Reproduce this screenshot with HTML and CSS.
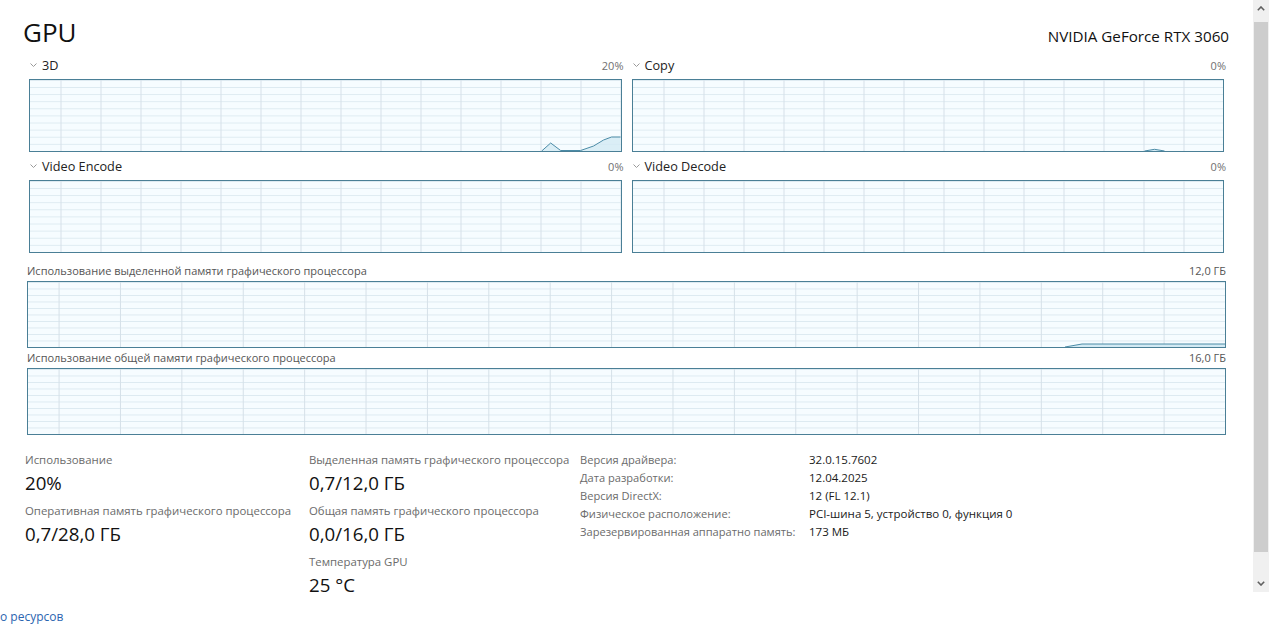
FILE: index.html
```html
<!DOCTYPE html>
<html lang="ru">
<head>
<meta charset="utf-8">
<title>GPU</title>
<link rel="stylesheet" href="styles.css">
</head>
<body>
<div class="window">
  <div class="main">
    <div class="content">
      <header class="head">
        <h1 class="title">GPU</h1>
        <div class="model">NVIDIA GeForce RTX 3060</div>
      </header>

      <div class="engines">
        <section class="engine">
          <div class="elabel">
            <span class="ename"><svg class="chev" viewBox="0 0 7 4" width="7" height="4"><polyline points="0.5,0.5 3.5,3.5 6.5,0.5" fill="none" stroke="#9a9a9a" stroke-width="1"/></svg>3D</span>
            <span class="epct">20%</span>
          </div>
          <div class="graph g-small">
            <svg class="curve" viewBox="0 0 592 71" preserveAspectRatio="none">
              <polygon points="513,71 522,63 532,70.5 552,70.5 565,66 575,60 583,57 592,57 592,71" fill="#d3eaf4" fill-opacity="0.8"/>
              <polyline points="513,71 522,63 532,70.5 552,70.5 565,66 575,60 583,57 592,57" fill="none" stroke="#4a8ba6" stroke-width="1"/>
            </svg>
          </div>
        </section>
        <section class="engine">
          <div class="elabel">
            <span class="ename"><svg class="chev" viewBox="0 0 7 4" width="7" height="4"><polyline points="0.5,0.5 3.5,3.5 6.5,0.5" fill="none" stroke="#9a9a9a" stroke-width="1"/></svg>Copy</span>
            <span class="epct">0%</span>
          </div>
          <div class="graph g-small">
            <svg class="curve" viewBox="0 0 591 71" preserveAspectRatio="none">
              <polygon points="512,71 522,69.3 532,71" fill="#d3eaf4"/>
              <polyline points="512,71 522,69.3 532,71" fill="none" stroke="#4a8ba6" stroke-width="1"/>
            </svg>
          </div>
        </section>
        <section class="engine">
          <div class="elabel">
            <span class="ename"><svg class="chev" viewBox="0 0 7 4" width="7" height="4"><polyline points="0.5,0.5 3.5,3.5 6.5,0.5" fill="none" stroke="#9a9a9a" stroke-width="1"/></svg>Video Encode</span>
            <span class="epct">0%</span>
          </div>
          <div class="graph g-small"></div>
        </section>
        <section class="engine">
          <div class="elabel">
            <span class="ename"><svg class="chev" viewBox="0 0 7 4" width="7" height="4"><polyline points="0.5,0.5 3.5,3.5 6.5,0.5" fill="none" stroke="#9a9a9a" stroke-width="1"/></svg>Video Decode</span>
            <span class="epct">0%</span>
          </div>
          <div class="graph g-small"></div>
        </section>
      </div>

      <section class="mem">
        <div class="mlabel">
          <span>Использование выделенной памяти графического процессора</span>
          <span>12,0 ГБ</span>
        </div>
        <div class="graph g-wide">
          <svg class="curve" viewBox="0 0 1197 65" preserveAspectRatio="none">
            <polygon points="1037,65 1054,62 1197,62 1197,65" fill="#d3eaf4"/>
            <polyline points="1037,65 1054,62 1197,62" fill="none" stroke="#4a8ba6" stroke-width="1"/>
          </svg>
        </div>
      </section>
      <section class="mem">
        <div class="mlabel">
          <span>Использование общей памяти графического процессора</span>
          <span>16,0 ГБ</span>
        </div>
        <div class="graph g-wide"></div>
      </section>

      <div class="stats">
        <div class="col">
          <div class="stat">
            <div class="slabel">Использование</div>
            <div class="svalue">20%</div>
          </div>
          <div class="stat">
            <div class="slabel">Оперативная память графического процессора</div>
            <div class="svalue">0,7/28,0 ГБ</div>
          </div>
        </div>
        <div class="col">
          <div class="stat">
            <div class="slabel">Выделенная память графического процессора</div>
            <div class="svalue">0,7/12,0 ГБ</div>
          </div>
          <div class="stat">
            <div class="slabel">Общая память графического процессора</div>
            <div class="svalue">0,0/16,0 ГБ</div>
          </div>
          <div class="stat">
            <div class="slabel">Температура GPU</div>
            <div class="svalue">25 °C</div>
          </div>
        </div>
        <dl class="details">
          <dt>Версия драйвера:</dt><dd>32.0.15.7602</dd>
          <dt>Дата разработки:</dt><dd>12.04.2025</dd>
          <dt>Версия DirectX:</dt><dd>12 (FL 12.1)</dd>
          <dt>Физическое расположение:</dt><dd>PCI-шина 5, устройство 0, функция 0</dd>
          <dt>Зарезервированная аппаратно память:</dt><dd>173 МБ</dd>
        </dl>
      </div>
    </div>

    <div class="scrollbar">
      <div class="sb-btn"><svg viewBox="0 0 8 5" width="8" height="5"><polyline points="0.8,4.2 4,1 7.2,4.2" fill="none" stroke="#606060" stroke-width="1.6"/></svg></div>
      <div class="sb-thumb"></div>
      <div class="sb-btn sb-down"><svg viewBox="0 0 8 5" width="8" height="5"><polyline points="0.8,0.8 4,4 7.2,0.8" fill="none" stroke="#606060" stroke-width="1.6"/></svg></div>
    </div>
  </div>
  <footer class="foot"><a class="link" href="#">о ресурсов</a></footer>
</div>
</body>
</html>
```

FILE: styles.css
```css
* { box-sizing: border-box; }
html, body { margin: 0; padding: 0; background: #fff; }
body {
  font-family: "Open Sans", "Liberation Sans", sans-serif;
  color: #1a1a1a;
  width: 1269px;
  height: 635px;
  overflow: hidden;
}
.window { display: flex; flex-direction: column; height: 635px; }
.main { display: flex; height: 598px; }
.content {
  flex: 1;
  padding: 15px 27px 0 27px;
  overflow: hidden;
}
.head {
  display: flex;
  justify-content: space-between;
  align-items: baseline;
  height: 34px;
  margin: 0 -3px 0 -4px;
}
.title {
  margin: 0;
  font-size: 26px;
  font-weight: 400;
  line-height: 34px;
  color: #111;
}
.model { font-size: 15.2px; color: #111; }

.engines {
  display: grid;
  grid-template-columns: 1fr 1fr;
  column-gap: 10px;
  row-gap: 7px;
  padding: 9px 2px 0 2px;
}
.elabel {
  display: flex;
  justify-content: space-between;
  align-items: flex-start;
  height: 16px;
  line-height: 14px;
  margin-bottom: 5px;
}
.ename {
  display: flex;
  align-items: center;
  gap: 5px;
  font-size: 12.7px;
  color: #222;
  padding-left: 1px;
}
.chev { display: block; }
.epct { font-size: 11px; line-height: 16px; color: #707070; margin-right: -2px; }

.graph {
  position: relative;
  border: 1px solid #4a7f96;
  background-color: #f6fcff;
  background-image:
    linear-gradient(to right, #d5e0e8 1px, transparent 1px),
    linear-gradient(to bottom, #dce9f0 1px, transparent 1px);
  background-size: 40px 100%, 100% 10%;
  background-position: right top, left top;
}
.g-small { height: 73px; }
.g-wide { height: 67px; background-size: 61.4px 100%, 100% 10%; }
.curve { position: absolute; left: 0; top: 0; width: 100%; height: 100%; display: block; }

.mem { margin-top: 11px; }
.mem + .mem { margin-top: 3px; }
.mlabel {
  display: flex;
  justify-content: space-between;
  font-size: 11px;
  line-height: 14px;
  color: #555;
  margin-bottom: 3px;
  white-space: nowrap;
}

.stats {
  display: grid;
  grid-template-columns: 284px 271px auto;
  margin: 16px 0 0 -2px;
  white-space: nowrap;
}
.stat { margin-bottom: 6px; }
.slabel { font-size: 11.4px; line-height: 18px; color: #6b6b6b; }
.svalue { font-size: 18.7px; line-height: 26px; margin-top: 1px; color: #111; }

.details {
  display: grid;
  grid-template-columns: 229px auto;
  margin: 0;
  font-size: 11.5px;
  line-height: 18px;
  align-content: start;
}
.details dt { color: #6b6b6b; font-size: 11.1px; }
.details dd { margin: 0; color: #1a1a1a; }

.scrollbar {
  width: 16px;
  height: 592px;
  background: #f0f0f0;
  display: flex;
  flex-direction: column;
  flex-shrink: 0;
}
.sb-btn {
  height: 17px;
  display: flex;
  align-items: center;
  justify-content: center;
}
.sb-thumb {
  margin: 5px 1px 0 1px;
  height: 530px;
  background: #cdcdcd;
}
.sb-down { margin-top: auto; }

.foot { padding-top: 8px; line-height: 18px; }
.link {
  font-size: 12px;
  color: #2b65b0;
  text-decoration: none;
}
```
